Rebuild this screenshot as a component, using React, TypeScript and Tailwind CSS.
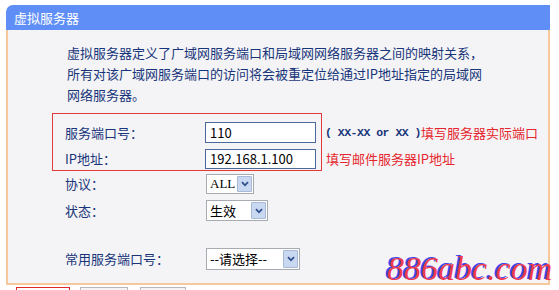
import React from "react";

function Chevron() {
  return (
    <svg width="8" height="6" viewBox="0 0 8 6">
      <path d="M1 1.2 L4 4.3 L7 1.2" fill="none" stroke="#2f4f8c" strokeWidth="1.8" />
    </svg>
  );
}

function Select({ text, box, textCls }: { text: string; box: string; textCls?: string }) {
  return (
    <div className={"flex items-stretch border border-[#a7acb3] bg-white " + box}>
      <span className={"flex-1 flex items-center pl-[3px] text-[13px] text-black whitespace-nowrap " + (textCls ?? "")}>{text}</span>
      <span className="m-[1px] w-[15px] flex items-center justify-center border border-[#a9bad6] bg-[#c9d8f1] rounded-[1px]">
        <Chevron />
      </span>
    </div>
  );
}

export default function App() {
  const label = "text-[13px] text-[#18357a] whitespace-nowrap";
  return (
    <div className="w-[559px] h-[290px] bg-white overflow-hidden relative font-['Noto_Sans_CJK_SC','Noto_Sans',sans-serif]">
      <div className="ml-[6px] mt-[5px] w-[544px] h-[25px] bg-[#5f8ff6] rounded-tl-[7px] text-white text-[13px] leading-[25px] pl-[8px]">
        虚拟服务器
      </div>
      <div className="ml-[6px] w-[544px] h-[255px] bg-[#f4f4f6] border-x-2 border-b-2 border-[#f7c89c] pt-[12px] flex flex-col">
        <div className="ml-[59px] text-[13px] leading-[21px] text-[#18357a] whitespace-nowrap">
          <div>虚拟服务器定义了广域网服务端口和局域网网络服务器之间的映射关系，</div>
          <div>所有对该广域网服务端口的访问将会被重定位给通过IP地址指定的局域网</div>
          <div>网络服务器。</div>
        </div>
        <div className="mt-[8px] flex items-start">
          <div className="ml-[44px] w-[270px] h-[58px] border border-[#e23a3a] pt-[8px] pl-[12px] flex flex-col gap-[6px]">
            <div className="flex items-center h-[21px]">
              <span className={label + " w-[140px]"}>服务端口号：</span>
              <div className="w-[111px] h-[21px] border border-[#4b6a9b] bg-white text-[13px] leading-[19px] pl-[4px] text-black">110</div>
            </div>
            <div className="flex items-center h-[20px]">
              <span className={label + " w-[140px]"}>IP地址：</span>
              <div className="w-[111px] h-[20px] border border-[#4b6a9b] bg-white text-[13px] leading-[18px] pl-[4px] text-black">192.168.1.100</div>
            </div>
          </div>
          <div className="ml-[3px] pt-[9px] flex flex-col gap-[6px]">
            <div className="flex items-center h-[21px] whitespace-nowrap">
              <span className="font-['Liberation_Mono',monospace] font-bold text-[11.5px] tracking-[-0.5px] text-[#18357a]">( XX-XX or XX )</span>
              <span className="text-[13px] text-[#e6262e]">填写服务器实际端口</span>
            </div>
            <div className="flex items-center h-[20px] whitespace-nowrap">
              <span className="ml-[1px] text-[13px] text-[#e6262e]">填写邮件服务器IP地址</span>
            </div>
          </div>
        </div>
        <div className="mt-[3px] ml-[57px] flex items-center h-[20px]">
          <span className={label + " w-[141px]"}>协议：</span>
          <Select text="ALL" box="w-[48px] h-[20px]" textCls="font-['Liberation_Serif',serif] text-[12px]" />
        </div>
        <div className="mt-[6px] ml-[57px] flex items-center h-[21px]">
          <span className={label + " w-[141px]"}>状态：</span>
          <Select text="生效" box="w-[62px] h-[21px]" />
        </div>
        <div className="mt-[27px] ml-[57px] flex items-center h-[22px]">
          <span className={label + " w-[141px]"}>常用服务端口号：</span>
          <Select text="--请选择--" box="w-[94px] h-[22px]" />
        </div>
      </div>
      <div className="mt-[2px] flex">
        <div className="ml-[16px] w-[54px] h-[20px] border border-[#e02a2a] bg-white"></div>
        <div className="ml-[10px] w-[48px] h-[20px] border border-[#b8b8b8] bg-[#f4f4f4]"></div>
        <div className="ml-[12px] w-[46px] h-[20px] border border-[#b8b8b8] bg-[#f4f4f4]"></div>
      </div>
      <div className="absolute left-[387px] top-[252px] text-[34px] leading-[34px] italic font-['Liberation_Serif',serif] text-[#ef3a4f] [text-shadow:-2px_-1px_0_#3b46f0] whitespace-nowrap">
        886abc.com
      </div>
    </div>
  );
}
